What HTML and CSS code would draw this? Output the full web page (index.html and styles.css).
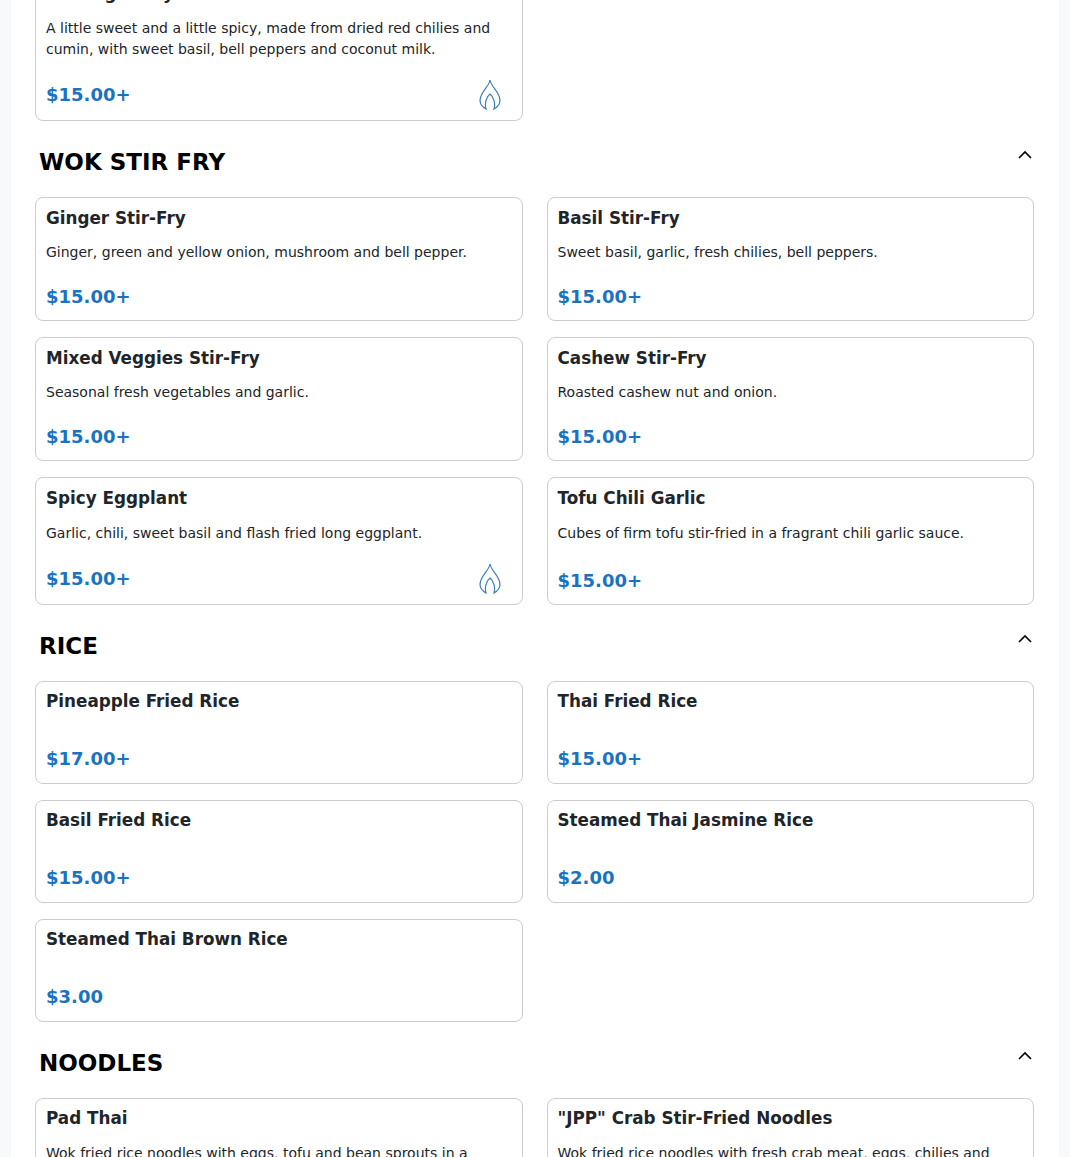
FILE: index.html
```html
<!DOCTYPE html>
<html lang="en">
<head>
    <meta charset="UTF-8">
    <meta name="viewport" content="width=device-width, initial-scale=1.0">
    <title>Menu</title>
    <link rel="stylesheet" href="styles.css">
</head>
<body>
    <svg class="icon-defs" width="0" height="0" aria-hidden="true">
        <symbol id="flame" viewBox="0 0 24 31">
            <path d="M12 1C13 7 19 11 21 17C23 22 21.500 27 16 30C17.500 25 16 18 12 15C8 18 6.500 25 8 30C2.500 27 1 22 3 17C5 11 11 7 12 1Z"/>
        </symbol>
        <symbol id="chevron" viewBox="0 0 16 16">
            <path d="M2 11L8 5L14 11"/>
        </symbol>
    </svg>

    <div class="menu">
        <section class="menu-section">
            <div class="item-grid">
                <div class="item-card">
                    <h3>Panang Curry</h3>
                    <p>A little sweet and a little spicy, made from dried red chilies and cumin, with sweet basil, bell peppers and coconut milk.</p>
                    <div class="item-footer">
                        <span class="price">$15.00+</span>
                        <svg class="flame"><use href="#flame"/></svg>
                    </div>
                </div>
            </div>
        </section>

        <section class="menu-section">
            <div class="section-head">
                <h2>WOK STIR FRY</h2>
                <svg class="chevron"><use href="#chevron"/></svg>
            </div>
            <div class="item-grid">
                <div class="item-card">
                    <h3>Ginger Stir-Fry</h3>
                    <p>Ginger, green and yellow onion, mushroom and bell pepper.</p>
                    <div class="item-footer"><span class="price">$15.00+</span></div>
                </div>
                <div class="item-card">
                    <h3>Basil Stir-Fry</h3>
                    <p>Sweet basil, garlic, fresh chilies, bell peppers.</p>
                    <div class="item-footer"><span class="price">$15.00+</span></div>
                </div>
                <div class="item-card">
                    <h3>Mixed Veggies Stir-Fry</h3>
                    <p>Seasonal fresh vegetables and garlic.</p>
                    <div class="item-footer"><span class="price">$15.00+</span></div>
                </div>
                <div class="item-card">
                    <h3>Cashew Stir-Fry</h3>
                    <p>Roasted cashew nut and onion.</p>
                    <div class="item-footer"><span class="price">$15.00+</span></div>
                </div>
                <div class="item-card">
                    <h3>Spicy Eggplant</h3>
                    <p>Garlic, chili, sweet basil and flash fried long eggplant.</p>
                    <div class="item-footer">
                        <span class="price">$15.00+</span>
                        <svg class="flame"><use href="#flame"/></svg>
                    </div>
                </div>
                <div class="item-card">
                    <h3>Tofu Chili Garlic</h3>
                    <p>Cubes of firm tofu stir-fried in a fragrant chili garlic sauce.</p>
                    <div class="item-footer"><span class="price">$15.00+</span></div>
                </div>
            </div>
        </section>

        <section class="menu-section">
            <div class="section-head">
                <h2>RICE</h2>
                <svg class="chevron"><use href="#chevron"/></svg>
            </div>
            <div class="item-grid">
                <div class="item-card">
                    <h3>Pineapple Fried Rice</h3>
                    <p></p>
                    <div class="item-footer"><span class="price">$17.00+</span></div>
                </div>
                <div class="item-card">
                    <h3>Thai Fried Rice</h3>
                    <p></p>
                    <div class="item-footer"><span class="price">$15.00+</span></div>
                </div>
                <div class="item-card">
                    <h3>Basil Fried Rice</h3>
                    <p></p>
                    <div class="item-footer"><span class="price">$15.00+</span></div>
                </div>
                <div class="item-card">
                    <h3>Steamed Thai Jasmine Rice</h3>
                    <p></p>
                    <div class="item-footer"><span class="price">$2.00</span></div>
                </div>
                <div class="item-card">
                    <h3>Steamed Thai Brown Rice</h3>
                    <p></p>
                    <div class="item-footer"><span class="price">$3.00</span></div>
                </div>
            </div>
        </section>

        <section class="menu-section">
            <div class="section-head">
                <h2>NOODLES</h2>
                <svg class="chevron"><use href="#chevron"/></svg>
            </div>
            <div class="item-grid">
                <div class="item-card">
                    <h3>Pad Thai</h3>
                    <p>Wok fried rice noodles with eggs, tofu and bean sprouts in a tangy tamarind sauce.</p>
                    <div class="item-footer"><span class="price">$15.00+</span></div>
                </div>
                <div class="item-card">
                    <h3>"JPP" Crab Stir-Fried Noodles</h3>
                    <p>Wok fried rice noodles with fresh crab meat, eggs, chilies and green onion.</p>
                    <div class="item-footer"><span class="price">$18.00+</span></div>
                </div>
            </div>
        </section>
    </div>
</body>
</html>
```

FILE: styles.css
```css
html, body {
    height: 100%;
    overflow: hidden;
}

body {
    margin: 0;
    background: #f8f9fa;
    color: #212529;
    font-family: "DejaVu Sans", sans-serif;
}

.icon-defs {
    display: block;
}

/* page was scrolled a bit in the original, first card is cut at the top */
.menu {
    width: 1048px;
    box-sizing: border-box;
    margin: -28px auto 0;
    padding: 0 25px 0 24px;
    background: #fff;
}

.menu-section {
    margin-bottom: 26.800px;
}

.menu-section:first-child {
    margin-bottom: 27.100px;
}

.section-head {
    display: flex;
    justify-content: space-between;
    align-items: flex-start;
    padding-left: 4px;
    margin-bottom: 21px;
}

.section-head h2 {
    margin: 0;
    font-size: 23px;
    line-height: 28px;
    font-weight: 700;
    color: #000;
}

.chevron {
    width: 16px;
    height: 16px;
    margin: -1px 1px 0 0;
    fill: none;
    stroke: #000;
    stroke-width: 1.6;
}

.item-grid {
    display: grid;
    grid-template-columns: 1fr 1fr;
    gap: 16px 24px;
}

.item-card {
    display: flex;
    flex-direction: column;
    background: #fff;
    border: 1px solid #ccc;
    border-radius: 8px;
    padding: 9.500px 10px 10px;
}

.item-card h3 {
    margin: 0 0 14.500px;
    font-size: 16.800px;
    line-height: 20px;
    font-weight: 700;
}

.item-card p {
    margin: auto 0;
    font-size: 14px;
    line-height: 21px;
    color: #212529;
}

.item-footer {
    display: flex;
    justify-content: space-between;
    align-items: center;
    margin-top: auto;
    padding-top: 20px;
}

.item-card p:empty + .item-footer {
    padding-top: 19px;
    padding-bottom: 1px;
}

.item-card:has(.flame) h3 {
    margin-bottom: 15.500px;
}

.item-card:has(.flame) .item-footer {
    padding-top: 19px;
}

.price {
    font-size: 18px;
    line-height: 27px;
    font-weight: 700;
    color: #1a73c0;
}

.flame {
    width: 24px;
    height: 31px;
    margin-right: 10px;
    fill: #fff;
    stroke: #3f7db8;
    stroke-width: 1.200;
}
```
